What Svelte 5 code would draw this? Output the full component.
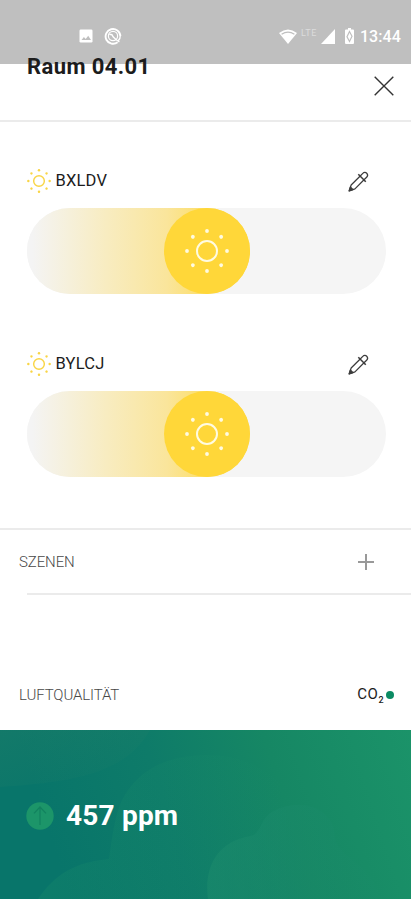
<script>
  const room = 'Raum 04.01';
  const time = '13:44';

  let lights = $state([
    { name: 'BXLDV', level: 50 },
    { name: 'BYLCJ', level: 50 },
  ]);

  const air = { value: 457, unit: 'ppm' };

  const rays = [0, 45, 90, 135, 180, 225, 270, 315];
</script>

{#snippet sun(dot, stroke)}
  <circle r="10" fill="none" stroke="currentColor" stroke-width={stroke} />
  {#each rays as angle}
    <circle cx="20" r={dot} fill="currentColor" transform="rotate({angle})" />
  {/each}
{/snippet}

<div class="screen">
  <div class="status-bar">
    <div class="notifications">
      <svg width="14" height="14" viewBox="0 0 14 14">
        <rect x="0.5" y="0.5" width="13" height="13" rx="1.2" fill="#fff" />
        <path d="M2.5 11l2.4-3 1.8 2 2.5-3.3L12 11z" fill="#bfbfbf" />
      </svg>
      <svg width="18" height="18" viewBox="0 0 18 18" fill="none" stroke="#fff">
        <path d="M13.6 15.2A7.4 7.4 0 1 1 16.4 9" stroke-width="1.9" />
        <circle cx="9" cy="9" r="4.6" stroke-width="1.2" />
        <path d="M5.3 7.2l2.6.5 1.2 2.1 2.8 2.7 3.5 2.5M16.3 8.5c0 2.5-.7 4-2 5.1" stroke-width="1.4" />
      </svg>
    </div>
    <div class="system">
      <svg class="wifi" width="18" height="15" viewBox="0 0 18 15">
        <path d="M0 4.1Q9-3.2 18 4.1L9 15z" fill="#fff" />
        <path d="M2.6 5.3Q9 .8 15.4 5.3" fill="none" stroke="#bfbfbf" stroke-width="1.2" />
      </svg>
      <span class="network">LTE</span>
      <svg class="signal" width="14" height="15" viewBox="0 0 14 15">
        <path d="M14 0v15H0z" fill="#fff" />
      </svg>
      <svg class="battery" width="9" height="16" viewBox="0 0 9 16">
        <path d="M3 0h3v1.5h2q1 0 1 1V15q0 1-1 1H1q-1 0-1-1V2.5q0-1 1-1h2z" fill="#fff" />
        <path d="M4.5 3.5L2 8.7l2.5 4.8L7 8.2z" fill="none" stroke="#bfbfbf" stroke-width="1.2" />
      </svg>
      <span class="time">{time}</span>
    </div>
  </div>

  <header>
    <h1>{room}</h1>
    <button class="close" aria-label="Schließen">
      <svg width="20" height="20" viewBox="0 0 20 20" stroke="#333" stroke-width="1.4">
        <path d="M.7.7l18.6 18.6M19.3.7L.7 19.3" />
      </svg>
    </button>
  </header>

  <section class="lights">
    {#each lights as light}
      <div class="light">
        <div class="light-head">
          <svg class="light-icon" width="24" height="24" viewBox="-22.5 -22.5 45 45">
            {@render sun(2.3, 2.7)}
          </svg>
          <span class="light-name">{light.name}</span>
          <button class="edit" aria-label="Bearbeiten">
            <svg width="21" height="21" viewBox="0 0 22 22" fill="none" stroke="#3c3c3c" stroke-width="1.3" stroke-linejoin="round">
              <path d="M12.8 5.2L3.3 14.7 1.2 20.8 7.3 18.7 16.8 9.2" />
              <path d="M12.8 5.2l2.7-2.7c2.8-2.8 6.8 1.2 4 4l-2.7 2.7" />
              <path d="M10.8 3.4l7.8 7.8" stroke-width="1.6" />
              <path d="M1.2 20.8l1.3-4 2.7 2.7z" fill="#3c3c3c" />
            </svg>
          </button>
        </div>
        <div class="track">
          <div class="fill" style="width: calc({light.level}% + 44px)">
            <div class="knob">
              <svg width="46" height="46" viewBox="-23 -23 46 46">
                {@render sun(1.9, 2)}
              </svg>
            </div>
          </div>
        </div>
      </div>
    {/each}
  </section>

  <section class="scenes">
    <h2>SZENEN</h2>
    <button class="add" aria-label="Szene hinzufügen">
      <svg width="16" height="16" viewBox="0 0 16 16" stroke="#999" stroke-width="2">
        <path d="M8 0v16M0 8h16" />
      </svg>
    </button>
  </section>

  <section class="air">
    <div class="air-head">
      <h2>LUFTQUALITÄT</h2>
      <span class="gas">CO<small>2</small></span>
      <span class="dot"></span>
    </div>
    <div class="air-card">
      <svg class="clouds" viewBox="0 0 411 169" preserveAspectRatio="none">
        <defs>
          <linearGradient id="haze" x1="0" y1="0" x2="1" y2="0">
            <stop offset="0" stop-color="#20966b" stop-opacity=".22" />
            <stop offset="1" stop-color="#20966b" stop-opacity="0" />
          </linearGradient>
          <linearGradient id="corner" x1="0" y1="0" x2="1" y2="1">
            <stop offset="0" stop-color="#238068" stop-opacity=".4" />
            <stop offset="1" stop-color="#238068" stop-opacity="0" />
          </linearGradient>
          <linearGradient id="front" x1="0" y1="0" x2="1" y2="0">
            <stop offset="0" stop-color="#1c8b6c" stop-opacity=".55" />
            <stop offset="1" stop-color="#1c8b6c" stop-opacity=".1" />
          </linearGradient>
        </defs>
        <path d="M0 0H150C125 45 70 52 0 57z" fill="url(#corner)" />
        <path d="M121 72C136 42 162 26 206 25C240 25 262 36 280 52L290 169H38C55 144 75 132 109 129C112 108 114 90 121 72z" fill="url(#haze)" />
        <path d="M208 169C204 138 216 112 250 106C262 104 259 90 272 82C300 66 334 78 335 106C335 126 376 136 380 169z" fill="url(#front)" />
      </svg>
      <div class="reading">
        <svg class="trend" width="28" height="28" viewBox="0 0 28 28">
          <circle cx="14" cy="14" r="13.7" fill="#1c9569" />
          <path d="M14 23V5M8 11.4L14 5l6 6.4" fill="none" stroke="#12825f" stroke-width="1.2" />
        </svg>
        <span class="value">{air.value} {air.unit}</span>
      </div>
    </div>
  </section>
</div>

<style>
  :global(body) {
    background: #fff;
  }

  .screen {
    display: flex;
    flex-direction: column;
    width: 411px;
    height: 900px;
    overflow: hidden;
    background: #fff;
    color: #1c1c1c;
    font-family: Roboto, 'Liberation Sans', sans-serif;
  }

  button {
    display: flex;
    padding: 0;
    border: none;
    background: none;
    cursor: pointer;
  }

  h1,
  h2 {
    margin: 0;
  }

  .status-bar {
    display: flex;
    flex: none;
    justify-content: space-between;
    box-sizing: border-box;
    height: 64px;
    padding: 8px 10px 0 79px;
    background: #bfbfbf;
    color: #fff;
  }

  .notifications,
  .system {
    display: flex;
    align-items: center;
  }

  .notifications {
    gap: 11px;
  }

  .network {
    margin: -7px 0 0 4px;
    width: 19px;
    font-size: 9px;
    letter-spacing: 0.7px;
    color: #dcdcdc;
  }

  .signal {
    margin-left: 1px;
  }

  .battery {
    margin-left: 10px;
  }

  .time {
    margin: 1px 0 0 6px;
    font-size: 16px;
    font-weight: 500;
    letter-spacing: 0.1px;
  }

  header {
    display: flex;
    flex: none;
    justify-content: space-between;
    box-sizing: border-box;
    height: 58px;
    padding: 0 17px 0 27px;
    border-bottom: 2px solid #ebebeb;
  }

  h1 {
    margin-top: -10px;
    font-size: 22px;
    font-weight: 700;
    line-height: 26px;
    letter-spacing: 0.4px;
  }

  .close {
    margin-top: 12px;
    height: 20px;
  }

  .lights {
    display: flex;
    flex: none;
    flex-direction: column;
    gap: 57px;
    box-sizing: border-box;
    height: 408px;
    padding: 46px 25px 0 26.5px;
    border-bottom: 2px solid #ebebeb;
  }

  .light-head {
    display: flex;
    align-items: center;
    height: 26px;
  }

  .light-icon {
    color: #f9d546;
  }

  .light-name {
    margin: -1px 0 0 5px;
    font-size: 16.5px;
    letter-spacing: 0.2px;
  }

  .edit {
    margin: 0 17px 0 auto;
  }

  .track {
    height: 86px;
    margin-top: 14px;
    border-radius: 43px;
    background: #f5f5f5;
  }

  .fill {
    display: flex;
    justify-content: flex-end;
    height: 86px;
    border-radius: 43px;
    background: linear-gradient(90deg, #f4f4f4 5px, #f8ecc0 80px, #fae59b 140px, #fddd60 185px);
  }

  .knob {
    display: flex;
    align-items: center;
    justify-content: center;
    width: 86px;
    height: 86px;
    border-radius: 50%;
    background: #ffd739;
    color: #fffbe2;
  }

  h2 {
    font-size: 15px;
    font-weight: 300;
    line-height: 18px;
    letter-spacing: -0.1px;
    color: #484848;
  }

  .scenes {
    display: flex;
    flex: none;
    align-items: center;
    justify-content: space-between;
    box-sizing: border-box;
    height: 65px;
    padding: 0 37px 2px 19px;
    background: linear-gradient(#ebebeb, #ebebeb) 27px 100% / 100% 2px no-repeat;
  }

  .air-head {
    display: flex;
    align-items: center;
    height: 18px;
    margin: 91px 17px 26px 19px;
  }

  .gas {
    margin-left: auto;
    font-size: 15px;
    line-height: 18px;
    letter-spacing: 0.5px;
  }

  .gas small {
    position: relative;
    top: 4px;
    font-size: 9px;
    font-weight: 500;
  }

  .dot {
    width: 8px;
    height: 8px;
    margin-left: 2px;
    border-radius: 50%;
    background: #0b8b63;
  }

  .air-card {
    position: relative;
    height: 169px;
    background: linear-gradient(72deg, #08756a 15%, #0e7b69 42%, #168764 68%, #1b9369 100%);
  }

  .clouds {
    position: absolute;
    inset: 0;
    width: 100%;
    height: 100%;
  }

  .reading {
    position: relative;
    display: flex;
    align-items: center;
    height: 171px;
    padding-left: 26px;
  }

  .value {
    margin-left: 12px;
    font-size: 28px;
    font-weight: 700;
    letter-spacing: 0.2px;
    color: #fff;
  }
</style>
